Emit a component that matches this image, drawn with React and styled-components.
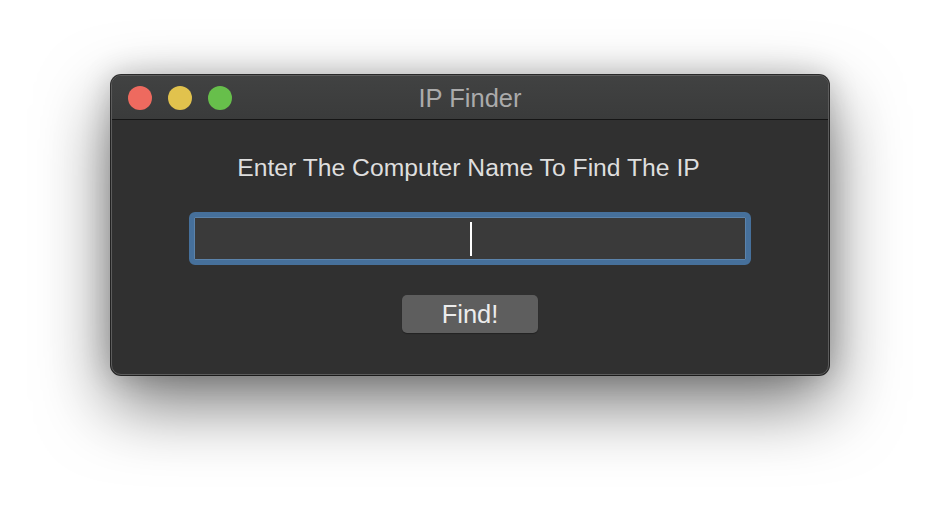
import React from 'react'
import styled, { createGlobalStyle } from 'styled-components'

const GlobalStyle = createGlobalStyle`
  html, body {
    margin: 0;
    padding: 0;
    background: #ffffff;
    font-family: "Liberation Sans", Arial, sans-serif;
  }
`

const Page = styled.div`
  width: 940px;
  height: 522px;
  box-sizing: border-box;
  padding: 75px 0 0 111px;
  overflow: hidden;
`

const Window = styled.div`
  width: 718px;
  height: 300px;
  box-sizing: border-box;
  display: flex;
  flex-direction: column;
  background: #303030;
  border: 1px solid #5c5c5c;
  border-radius: 10px;
  overflow: hidden;
  box-shadow: 0 0 0 1px rgba(0, 0, 0, 0.8), 0 28px 70px rgba(0, 0, 0, 0.55),
    0 0 30px rgba(0, 0, 0, 0.2);
`

const TitleBar = styled.div`
  height: 43px;
  display: grid;
  grid-template-columns: 1fr auto 1fr;
  align-items: center;
  padding: 0 16px;
  background: linear-gradient(#414242, #3a3b3b);
  border-bottom: 1px solid #151515;
`

const Lights = styled.div`
  display: flex;
  gap: 16px;
`

const Light = styled.span`
  width: 24px;
  height: 24px;
  border-radius: 50%;
  background: ${p => p.color};
`

const Title = styled.div`
  font-size: 25.5px;
  color: #ababab;
  padding-top: 1px;
`

const Body = styled.div`
  flex: 1;
  display: flex;
  flex-direction: column;
  align-items: center;
  padding-top: 34px;
`

const Prompt = styled.div`
  font-size: 24.7px;
  line-height: 28px;
  color: #dedede;
  margin-left: -3px;
`

const InputBox = styled.div`
  margin-top: 30px;
  width: 562px;
  height: 53px;
  box-sizing: border-box;
  display: flex;
  align-items: center;
  justify-content: center;
  background: #3a3a3a;
  border: 5px solid #46709b;
  border-radius: 6px;
  box-shadow: inset 0 0 0 1px #5b83ab;
`

const Caret = styled.span`
  width: 2px;
  height: 34px;
  margin-left: 1px;
  background: #ffffff;
`

const Button = styled.button`
  margin-top: 30px;
  width: 136px;
  height: 38px;
  border: none;
  border-radius: 5px;
  background: #5e5e5e;
  color: #ececec;
  font-family: "Liberation Sans", Arial, sans-serif;
  font-size: 25.5px;
  padding: 0;
  box-shadow: 0 1px 1px rgba(0, 0, 0, 0.3);
`

const App = () => {
    return <Page>
        <GlobalStyle />
        <Window>
            <TitleBar>
                <Lights>
                    <Light color="#ee6a5f" />
                    <Light color="#e1c24d" />
                    <Light color="#67bf4b" />
                </Lights>
                <Title>IP Finder</Title>
                <div />
            </TitleBar>
            <Body>
                <Prompt>Enter The Computer Name To Find The IP</Prompt>
                <InputBox>
                    <Caret />
                </InputBox>
                <Button>Find!</Button>
            </Body>
        </Window>
    </Page>
}

export default App
